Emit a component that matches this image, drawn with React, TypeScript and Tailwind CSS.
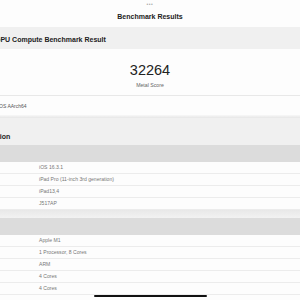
import React from "react";

// ─── Data ─────────────────────────────────────────────────────────────────────

const systemRows = ["iOS 16.3.1", "iPad Pro (11-inch 3rd generation)", "iPad13,4", "J517AP"];
const cpuRows = ["Apple M1", "1 Processor, 8 Cores", "ARM", "4 Cores", "4 Cores"];

function ValueRow({ value }: { value: string }) {
  return (
    <div className="h-[12px] flex items-center border-b border-[#ececec] pl-[39px] text-[5.1px] text-[#777] shrink-0">
      {value}
    </div>
  );
}

// ─── Main component ───────────────────────────────────────────────────────────

export default function App() {
  return (
    <div
      className="relative w-[300px] h-[300px] overflow-hidden bg-[#fdfdfd] flex flex-col"
      style={{ fontFamily: '"Liberation Sans", Arial, sans-serif' }}
    >
      {/* ── Title bar ─────────────────────────────────────────────────────── */}
      <div className="h-[27px] flex flex-col items-center shrink-0">
        <div className="mt-[2px] text-[5px] leading-[5px] tracking-[0.5px] text-[#aaa]">•••</div>
        <div className="mt-[6px] text-[7px] font-bold text-[#222] leading-[8px]">Benchmark Results</div>
      </div>

      {/* ── Compute result ────────────────────────────────────────────────── */}
      <div className="h-[22px] bg-[#f0f0f0] flex items-center shrink-0">
        <span className="-ml-[5px] mt-[5px] text-[7px] font-bold text-[#222]">GPU Compute Benchmark Result</span>
      </div>
      <div className="h-[47px] flex flex-col items-center border-b border-[#e8e8e8] shrink-0">
        <div className="mt-[13px] text-[14.5px] leading-[16px] text-[#222]">32264</div>
        <div className="mt-[4px] text-[5.2px] text-[#666]">Metal Score</div>
      </div>
      <div className="h-[19px] flex items-center pt-[3px] shrink-0">
        <span className="-ml-[2px] text-[5px] text-[#555]">iOS AArch64</span>
      </div>
      <div className="h-[3px] bg-gradient-to-b from-[#f8f8f8] to-[#e6e6e6] shrink-0" />

      {/* ── System information ────────────────────────────────────────────── */}
      <div className="h-[27px] bg-[#f0f0f0] flex items-end pb-[3px] shrink-0">
        <span className="-ml-[55px] text-[7px] font-bold text-[#222]">System Information</span>
      </div>
      <div className="h-[17px] bg-[#dcdcdc] shrink-0" />
      {systemRows.map((v) => (
        <ValueRow key={v} value={v} />
      ))}
      <div className="h-[8px] bg-gradient-to-b from-[#e8e8e8] to-[#f2f2f2] shrink-0" />
      <div className="h-[17px] bg-[#dcdcdc] shrink-0" />
      {cpuRows.map((v, i) => (
        <ValueRow key={i} value={v} />
      ))}

      {/* ── Home indicator ────────────────────────────────────────────────── */}
      <div className="absolute left-[94px] bottom-[3px] w-[113px] h-[2px] rounded-full bg-[#111]" />
    </div>
  );
}
